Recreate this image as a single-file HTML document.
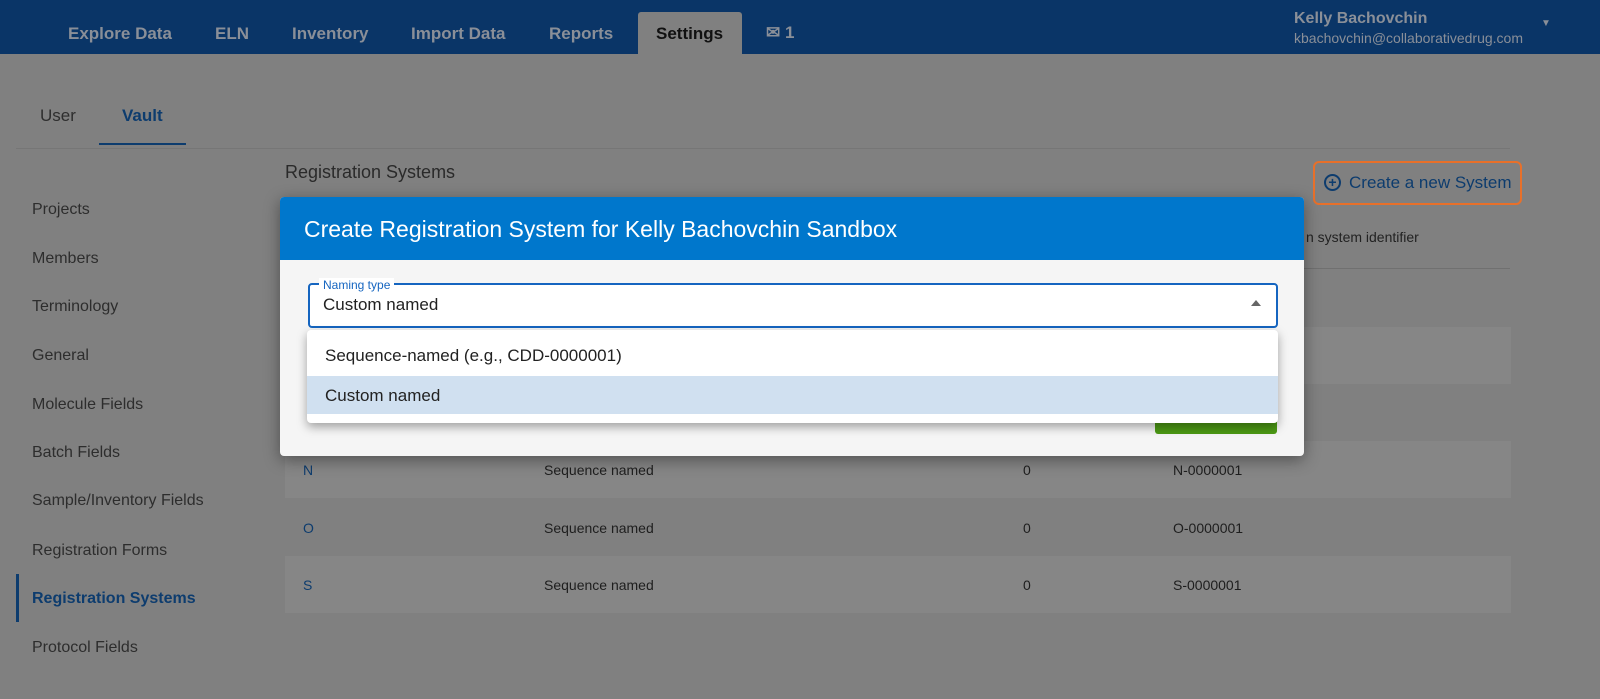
<!DOCTYPE html>
<html><head><style>
*{margin:0;padding:0;box-sizing:border-box}
body{width:1600px;height:699px;overflow:hidden;background:#808080;font-family:"Liberation Sans",sans-serif;position:relative}
.abs{position:absolute}
.nav{left:0;top:0;width:1600px;height:54px;background:#0a3567}
.nav span{position:absolute;top:24px;font-size:17px;font-weight:bold;color:#8a8f98}
.side{position:absolute;left:32px;font-size:16px;color:#2d2d2d}
.row{position:absolute;left:285px;width:1226px;height:57px;background:#868686}
.cell{position:absolute;font-size:14px;color:#1e1e1e}
</style></head><body>
<div class="abs nav">
<span style="left:68px">Explore Data</span>
<span style="left:215px">ELN</span>
<span style="left:292px">Inventory</span>
<span style="left:411px">Import Data</span>
<span style="left:549px">Reports</span>
<div class="abs" style="left:638px;top:12px;width:104px;height:42px;background:#808080;border-radius:3px 3px 0 0"></div>
<span style="left:656px;color:#111">Settings</span>
<span style="left:766px;top:23px">✉ 1</span>
<span style="left:1294px;top:10px;font-size:16px">Kelly Bachovchin</span>
<span style="left:1294px;top:30px;font-size:14px;font-weight:normal">kbachovchin@collaborativedrug.com</span>
<span style="left:1541px;top:18px;font-size:10px">▼</span>
</div>
<div class="abs" style="left:40px;top:106px;font-size:17px;color:#2e2e2e">User</div>
<div class="abs" style="left:122px;top:106px;font-size:17px;font-weight:bold;color:#0d3c6e">Vault</div>
<div class="abs" style="left:99px;top:143px;width:87px;height:2px;background:#0d3c6e"></div>
<div class="abs" style="left:16px;top:148px;width:1494px;height:1px;background:#767676"></div>
<div class="side" style="top:201px">Projects</div>
<div class="side" style="top:250px">Members</div>
<div class="side" style="top:298px">Terminology</div>
<div class="side" style="top:347px">General</div>
<div class="side" style="top:396px">Molecule Fields</div>
<div class="side" style="top:444px">Batch Fields</div>
<div class="side" style="top:492px">Sample/Inventory Fields</div>
<div class="side" style="top:542px">Registration Forms</div>
<div class="abs" style="left:16px;top:574px;width:3px;height:48px;background:#0d3c6e"></div>
<div class="side" style="top:590px;font-weight:bold;color:#0d3c6e">Registration Systems</div>
<div class="side" style="top:639px">Protocol Fields</div>
<div class="abs" style="left:285px;top:162px;font-size:18px;color:#2a2a2a">Registration Systems</div>
<div class="abs" style="left:1313px;top:161px;width:209px;height:44px;border:2px solid #e8702a;border-radius:6px"></div>
<div class="abs" style="left:1324px;top:174px;width:17px;height:17px;border:2px solid #0d3c6e;border-radius:50%;color:#0d3c6e;font-size:14px;line-height:12px;text-align:center;font-weight:bold">+</div>
<div class="abs" style="left:1349px;top:173px;font-size:17px;color:#0d3c6e">Create a new System</div>
<div class="abs" style="left:1306px;top:229px;font-size:14px;color:#222">n system identifier</div>
<div class="abs" style="left:1300px;top:268px;width:210px;height:1px;background:#707070"></div>
<div class="row" style="top:327px"></div>
<div class="row" style="top:441px"></div>
<div class="row" style="top:556px"></div>
<div class="cell" style="left:303px;top:462px;color:#0d3c6e">N</div>
<div class="cell" style="left:544px;top:462px">Sequence named</div>
<div class="cell" style="left:1023px;top:462px">0</div>
<div class="cell" style="left:1173px;top:462px">N-0000001</div>
<div class="cell" style="left:303px;top:520px;color:#0d3c6e">O</div>
<div class="cell" style="left:544px;top:520px">Sequence named</div>
<div class="cell" style="left:1023px;top:520px">0</div>
<div class="cell" style="left:1173px;top:520px">O-0000001</div>
<div class="cell" style="left:303px;top:577px;color:#0d3c6e">S</div>
<div class="cell" style="left:544px;top:577px">Sequence named</div>
<div class="cell" style="left:1023px;top:577px">0</div>
<div class="cell" style="left:1173px;top:577px">S-0000001</div>
<!-- modal -->
<div class="abs" style="left:280px;top:197px;width:1024px;height:259px;background:#f5f5f5;border-radius:4px;overflow:hidden;box-shadow:0 4px 16px rgba(0,0,0,.4)">
<div style="height:63px;background:#0077cc;color:#fff;font-size:23px;padding:19px 0 0 24px">Create Registration System for Kelly Bachovchin Sandbox</div>
</div>
<div class="abs" style="left:1155px;top:410px;width:122px;height:24px;background:#4c9a14;border-radius:3px"></div>
<div class="abs" style="left:308px;top:283px;width:970px;height:45px;border:2px solid #1565c0;border-radius:4px;background:#fff"></div>
<div class="abs" style="left:319px;top:278px;padding:0 4px;background:#fff;font-size:12px;color:#1565c0">Naming type</div>
<div class="abs" style="left:323px;top:295px;font-size:17px;color:#222">Custom named</div>
<div class="abs" style="left:1251px;top:300px;width:0;height:0;border-left:5px solid transparent;border-right:5px solid transparent;border-bottom:6px solid #666"></div>
<div class="abs" style="left:307px;top:330px;width:971px;height:93px;background:#fff;border-radius:4px;box-shadow:0 4px 10px rgba(0,0,0,.35)">
<div class="abs" style="left:18px;top:16px;font-size:17px;color:#222">Sequence-named (e.g., CDD-0000001)</div>
<div class="abs" style="left:0;top:46px;width:971px;height:38px;background:#d0e0f0"></div>
<div class="abs" style="left:18px;top:56px;font-size:17px;color:#222">Custom named</div>
</div>
</body></html>
